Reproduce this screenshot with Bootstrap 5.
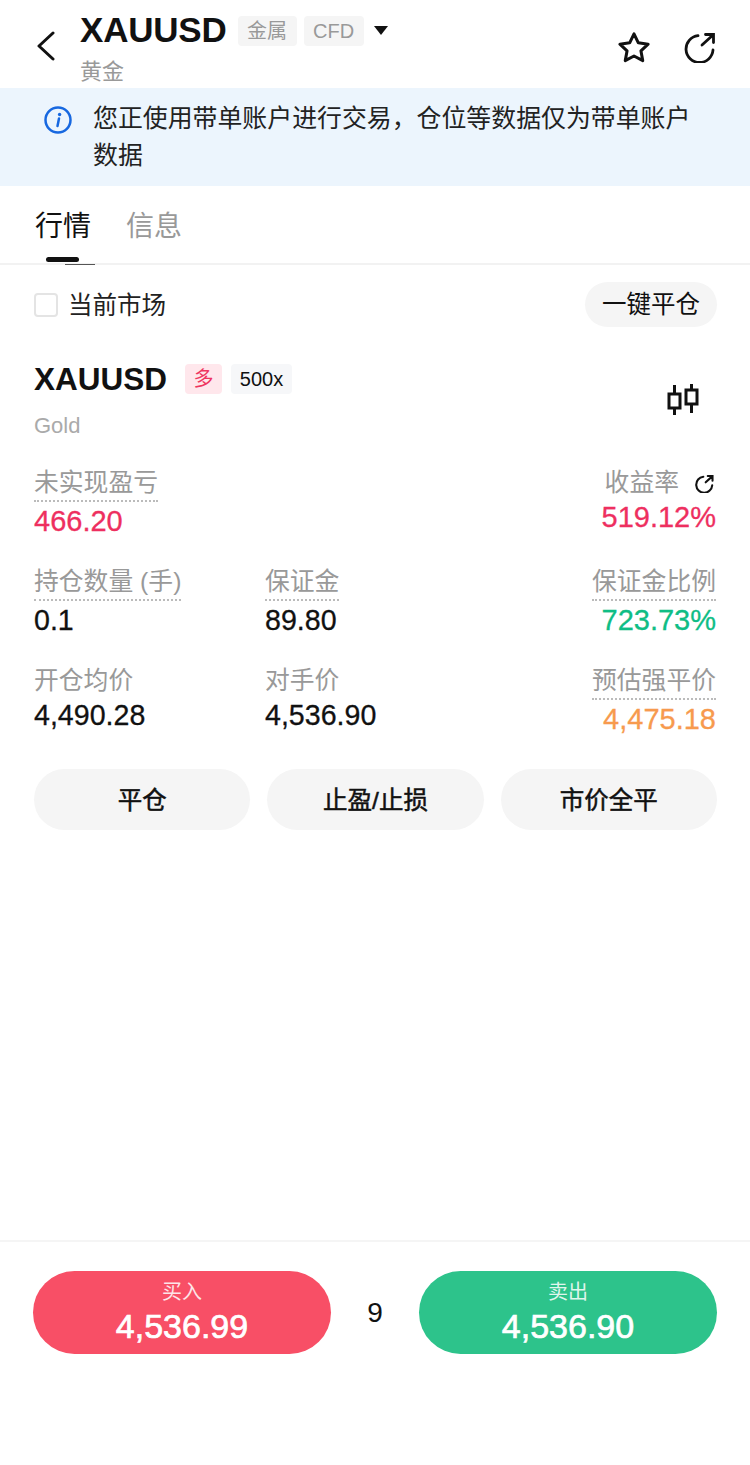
<!DOCTYPE html>
<html lang="zh-CN">
<head>
  <meta charset="UTF-8">
  <meta name="viewport" content="width=device-width, initial-scale=1.0">
  <title>XAUUSD</title>
  <link href="https://cdn.jsdelivr.net/npm/bootstrap@5.3.0/dist/css/bootstrap.min.css" rel="stylesheet">
  <style>
    body { font-family: "Liberation Sans", "Noto Sans CJK SC", sans-serif; color: #111; background: #fff; }
    .page { width: 750px; height: 1465px; overflow: hidden; }
    .head-bar { height: 88px; padding-left: 36px; padding-right: 34px; }
    .back-ico { width: 20px; margin-right: 24px; margin-top: 4px; }
    .sym-title { font-size: 35px; line-height: 40px; font-weight: 700; letter-spacing: -.2px; }
    .sym-sub { font-size: 22px; line-height: 30px; color: #999; margin-top: 7px; }
    .tag-grey { background: #f5f5f5; color: #999; font-size: 20px; line-height: 30px; height: 30px; padding: 0 9.5px; border-radius: 4px; margin-top: 2px; margin-left: 7px; }
    .tag-first { margin-left: 11px; }
    .caret-ico { width: 14px; height: 9px; margin-left: 10px; }
    .head-txt { margin-top: 9px; }
    .head-tools { gap: 33px; margin-top: 6px; }
    .notice { height: 98px; background: #ecf5fd; padding: 12px 50px 0 44px; font-size: 24.9px; line-height: 37px; color: #222; border: 0; border-radius: 0; margin: 0; }
    .notice svg { flex: none; margin: 6px 21px 0 0; }
    .tab-bar { height: 79px; border-bottom: 2px solid #f2f2f2; padding: 0 35px; gap: 35px; }
    .tab-item { font-size: 28px; line-height: 38px; color: #999; padding: 22px 0 0; position: relative; height: 79px; }
    .tab-item.on { color: #111; }
    .tab-item.on::after { content: ""; position: absolute; left: 11px; bottom: 3px; width: 33px; height: 5px; background: #111; border-radius: 3px; }
    .tab-item.on::before { content: ""; position: absolute; left: 30px; bottom: 0; width: 30px; height: 1px; background: #555; }
    .filter-row { padding: 17px 33px 0 34px; }
    .chk-box { width: 24px; height: 24px; margin: 0 10px 0 0; border: 2px solid #e4e4e4; border-radius: 3px; float: none; }
    .filter-txt { font-size: 24.5px; line-height: 30px; padding-top: 2px; color: #222; }
    .pill-small { background: #f5f5f5; border: 0; color: #111; font-size: 24.5px; line-height: 30px; width: 132px; height: 45px; padding: 0; }
    .pos-wrap { padding: 0 33px 0 34px; }
    .pos-head { margin-top: 36px; height: 103px; }
    .pos-sym { font-size: 31.5px; line-height: 32px; font-weight: 700; }
    .tag-side { background: #ffe7ec; color: #ee3560; font-size: 20px; line-height: 30px; width: 37px; height: 30px; text-align: center; border-radius: 4px; margin-left: 18px; }
    .tag-lev { background: #f6f7f9; color: #111; font-size: 20px; line-height: 30px; width: 61px; height: 30px; text-align: center; border-radius: 4px; margin-left: 9px; }
    .pos-name { font-size: 22px; line-height: 28px; color: #aaa; margin-top: 17px; }
    .candle-ico { margin: 21px 18px 0 0; }
    .metric-row { height: 99px; }
    .metric-cell { width: 231px; }
    .metric-last { margin-left: auto; margin-right: 1px; text-align: right; }
    .m-label { display: inline-block; font-size: 24.8px; line-height: 34px; color: #999; }
    .m-label.dots { border-bottom: 2px dotted #bbb; margin-bottom: 2px; }
    .m-label svg { margin: 0 2px 0 16px; vertical-align: -2px; }
    .m-value { font-size: 28.6px; line-height: 34px; color: #111; -webkit-text-stroke: .3px currentColor; }
    .m-value.red { color: #ee2f5f; font-size: 29px; }
    .m-value.green { color: #0fbd85; font-size: 29px; }
    .m-value.orange { color: #f79a4e; font-size: 29px; }
    .act-row { gap: 17px; margin-top: 6px; }
    .act-btn { flex: 1 1 0; height: 61px; background: #f5f5f5; border: 0; color: #111; font-size: 24.5px; -webkit-text-stroke: .5px #111; padding: 3px 0 0; }
    .foot-bar { height: 225px; border-top: 2px solid #f5f5f5; padding: 29px 33px 0; }
    .trade-btn { width: 298px; height: 83px; border: 0; color: #fff; padding: 3px 0 0; }
    .trade-btn span { display: block; }
    .t-lab { font-size: 20px; line-height: 24px; opacity: .85; }
    .t-price { font-size: 34px; line-height: 44px; -webkit-text-stroke: .7px #fff; }
    .buy-btn, .buy-btn:hover { background: #f84f66; color: #fff; }
    .sell-btn, .sell-btn:hover { background: #2dc38b; color: #fff; }
    .spread-val { font-size: 28px; line-height: 83px; color: #111; }
  </style>
</head>
<body>
  <div class="page d-flex flex-column">

    <div class="head-bar d-flex align-items-center">
      <svg class="back-ico" viewBox="0 0 20 30" height="30" fill="none" stroke="#111" stroke-width="3" stroke-linecap="round" stroke-linejoin="round"><path d="M17 2 3 15l14 13"/></svg>
      <div class="head-txt">
        <div class="d-flex align-items-center">
          <span class="sym-title">XAUUSD</span>
          <span class="tag-grey tag-first">金属</span>
          <span class="tag-grey">CFD</span>
          <svg class="caret-ico" viewBox="0 0 14 9"><path d="M0 0h14L7 9z" fill="#111"/></svg>
        </div>
        <div class="sym-sub">黄金</div>
      </div>
      <div class="head-tools ms-auto d-flex align-items-center">
        <svg width="34" height="32" viewBox="0 0 36 34" fill="none" stroke="#111" stroke-width="3.2" stroke-linejoin="round"><path d="M18 3l4.6 9.6 10.4 1.400-7.600 7.200 1.900 10.300L18 26.600 8.700 31.500l1.900-10.300L3 14l10.400-1.400z"/></svg>
        <svg width="32" height="32" viewBox="0 0 32 32" fill="none" stroke="#111" stroke-width="2.8" stroke-linecap="round"><path d="M29 19A13.500 13.500 0 1 1 14 4.600"/><path d="M18 14 29 4M21.500 3.500h8v8"/></svg>
      </div>
    </div>

    <div class="alert notice d-flex align-items-start">
      <svg width="28" height="28" viewBox="0 0 28 28"><circle cx="14" cy="14" r="12.500" fill="none" stroke="#1768e0" stroke-width="2.500"/><path d="M15 12.500 13.500 20" stroke="#1768e0" stroke-width="2.500" stroke-linecap="round"/><circle cx="15.600" cy="8.500" r="1.700" fill="#1768e0"/></svg>
      <div>您正使用带单账户进行交易，仓位等数据仅为带单账户数据</div>
    </div>

    <div class="tab-bar d-flex">
      <div class="tab-item on">行情</div>
      <div class="tab-item">信息</div>
    </div>

    <div class="filter-row d-flex align-items-center justify-content-between">
      <div class="d-flex align-items-center">
        <input class="form-check-input chk-box" type="checkbox">
        <span class="filter-txt">当前市场</span>
      </div>
      <button class="btn pill-small rounded-pill">一键平仓</button>
    </div>

    <div class="pos-wrap">
      <div class="pos-head d-flex justify-content-between">
        <div>
          <div class="d-flex align-items-center">
            <span class="pos-sym">XAUUSD</span>
            <span class="tag-side">多</span>
            <span class="tag-lev">500x</span>
          </div>
          <div class="pos-name">Gold</div>
        </div>
        <svg class="candle-ico" width="32" height="32" viewBox="0 0 32 32" fill="none" stroke="#111" stroke-width="3"><rect x="2" y="10" width="11" height="14"/><rect x="19" y="6" width="11" height="14"/><path d="M7.500 1v9M7.500 24v7M24.500 0v6M24.500 20v9"/></svg>
      </div>

      <div class="metric-row d-flex">
        <div class="metric-cell">
          <div class="m-label dots">未实现盈亏</div>
          <div class="m-value red">466.20</div>
        </div>
        <div class="metric-last">
          <div class="m-label">收益率<svg width="19" height="19" viewBox="0 0 32 32" fill="none" stroke="#111" stroke-width="3.5" stroke-linecap="round"><path d="M29 19A13.500 13.500 0 1 1 14 4.600"/><path d="M18 14 29 4M21.500 3.500h8v8"/></svg></div>
          <div class="m-value red">519.12%</div>
        </div>
      </div>

      <div class="metric-row d-flex">
        <div class="metric-cell">
          <div class="m-label dots">持仓数量 (手)</div>
          <div class="m-value">0.1</div>
        </div>
        <div class="metric-cell">
          <div class="m-label dots">保证金</div>
          <div class="m-value">89.80</div>
        </div>
        <div class="metric-last">
          <div class="m-label dots">保证金比例</div>
          <div class="m-value green">723.73%</div>
        </div>
      </div>

      <div class="metric-row d-flex">
        <div class="metric-cell">
          <div class="m-label">开仓均价</div>
          <div class="m-value">4,490.28</div>
        </div>
        <div class="metric-cell">
          <div class="m-label">对手价</div>
          <div class="m-value">4,536.90</div>
        </div>
        <div class="metric-last">
          <div class="m-label dots">预估强平价</div>
          <div class="m-value orange">4,475.18</div>
        </div>
      </div>

      <div class="act-row d-flex">
        <button class="btn act-btn rounded-pill">平仓</button>
        <button class="btn act-btn rounded-pill">止盈/止损</button>
        <button class="btn act-btn rounded-pill">市价全平</button>
      </div>
    </div>

    <div class="foot-bar mt-auto d-flex justify-content-between align-items-start">
      <button class="btn trade-btn buy-btn rounded-pill">
        <span class="t-lab">买入</span>
        <span class="t-price">4,536.99</span>
      </button>
      <div class="spread-val">9</div>
      <button class="btn trade-btn sell-btn rounded-pill">
        <span class="t-lab">卖出</span>
        <span class="t-price">4,536.90</span>
      </button>
    </div>
  </div>
  <script src="https://cdn.jsdelivr.net/npm/bootstrap@5.3.0/dist/js/bootstrap.bundle.min.js"></script>
</body>
</html>
